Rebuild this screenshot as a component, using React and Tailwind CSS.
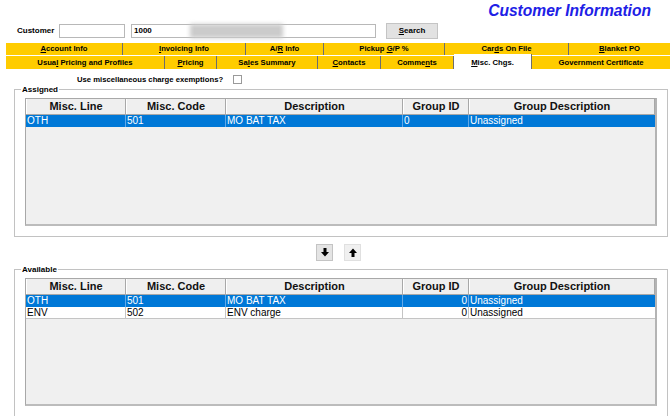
import React from "react";

const F = { fontFamily: '"Liberation Sans", Arial, sans-serif' };

function Tab({ w, children, sel, last }) {
  return (
    <div
      className={`flex items-center justify-center h-full text-[7.7px] font-bold text-black ${
        last ? "" : "border-r border-r-[#6e6e6e]"
      } ${sel ? "bg-white" : "bg-[#ffcc00]"}`}
      style={{ width: w }}
    >
      {children}
    </div>
  );
}

const COLS = [100, 100, 177, 66];

function Cell({ i, children, right, sel, header }) {
  const w = i < 4 ? { width: COLS[i] } : {};
  return (
    <div
      className={`${i < 4 ? "shrink-0" : "flex-1"} h-full overflow-hidden whitespace-nowrap ${
        header
          ? "flex items-center justify-center border-r border-r-[#a8a8a8] border-l border-l-white"
          : `px-[1px] ${right ? "text-right" : ""} ${i < 4 ? (sel ? "border-r border-r-[#62a8e8]" : "border-r border-r-[#c4c4c4]") : ""}`
      }`}
      style={w}
    >
      {children}
    </div>
  );
}

function Table({ rows, rightId }) {
  const heads = ["Misc. Line", "Misc. Code", "Description", "Group ID", "Group Description"];
  return (
    <div className="w-[632px] h-[128px] bg-[#f0f0f0] border border-[#a8a8a8] border-r-2 border-r-[#b4b4b4] border-b-2 border-b-[#bcbcbc] flex flex-col">
      <div className="flex h-[16px] bg-[#efefef] border-b border-b-[#a8a8a8] text-[11px] font-bold text-[#111]">
        {heads.map((h, i) => (
          <Cell key={i} i={i} header>
            {h}
          </Cell>
        ))}
      </div>
      {rows.map((r, ri) => (
        <div
          key={ri}
          className={`flex h-[12px] text-[10px] leading-[12px] ${
            r.sel ? "bg-[#0078d7] text-white" : "bg-white text-black border-b border-b-[#c4c4c4]"
          }`}
        >
          {r.cells.map((c, i) => (
            <Cell key={i} i={i} sel={r.sel} right={rightId && i === 3}>
              {c}
            </Cell>
          ))}
        </div>
      ))}
    </div>
  );
}

function Group({ label, children, h }) {
  return (
    <fieldset className="ml-[14px] w-[654px] border border-[#c2c2c2] m-0 p-0" style={{ minHeight: h }}>
      <legend className="ml-[6px] px-[1px] text-[8px] leading-[9px] font-bold text-black">{label}</legend>
      <div className="px-[10px] pt-[4px] pb-[10px]">{children}</div>
    </fieldset>
  );
}

function Arrow({ up }) {
  return (
    <svg width="8" height="9" viewBox="0 0 8 9" className={up ? "rotate-180" : ""}>
      <path d="M2.5 0h3v4H8L4 8.6 0 4h2.5z" fill="#000" />
    </svg>
  );
}

export default function App() {
  return (
    <div className="w-[670px] h-[416px] overflow-hidden bg-white relative" style={F}>
      <div className="h-[22px] flex justify-end items-start pr-[19px] pt-[2px]">
        <span className="text-[15.6px] leading-[18px] font-bold italic text-[#2020e6]">Customer Information</span>
      </div>
      <div className="h-[17px] flex items-center text-[8px] font-bold text-black">
        <span className="ml-[17px] w-[42px]">Customer</span>
        <div className="w-[66px] h-[14px] border border-[#b8b8b8] bg-white" />
        <div className="ml-[6px] w-[245px] h-[14px] border border-[#b8b8b8] bg-white flex items-center overflow-visible">
          <span className="pl-[2px] w-[58px]">1000</span>
          <span className="w-[93px] h-[14px] bg-[#cbcbcb] blur-[2px]" />
        </div>
        <div className="ml-[10px] w-[52px] h-[16px] bg-[#e2e2e2] border border-[#c4c4c4] flex items-center justify-center">
          <span>
            <u>S</u>earch
          </span>
        </div>
      </div>
      <div className="mt-[4px] ml-[6px] flex h-[12px]">
        <Tab w={117}><span><u>A</u>ccount Info</span></Tab>
        <Tab w={123}><span><u>I</u>nvoicing Info</span></Tab>
        <Tab w={78}><span>A/<u>R</u> Info</span></Tab>
        <Tab w={121}><span>Pickup <u>G</u>/P %</span></Tab>
        <Tab w={124}><span>Car<u>d</u>s On File</span></Tab>
        <Tab w={101} last><span><u>B</u>lanket PO</span></Tab>
      </div>
      <div className="mt-[1px] ml-[6px] flex h-[13px]">
        <Tab w={159}><span>Usua<u>l</u> Pricing and Profiles</span></Tab>
        <Tab w={52}><span><u>P</u>ricing</span></Tab>
        <Tab w={101}><span>Sa<u>l</u>es Summary</span></Tab>
        <Tab w={63}><span><u>C</u>ontacts</span></Tab>
        <Tab w={73}><span>Comme<u>n</u>ts</span></Tab>
        <div className="w-[78px] h-[15px] -mt-[2px] bg-white border-r border-r-[#6e6e6e] flex items-start justify-center pt-[3px] text-[7.7px] font-bold text-black">
          <span><u>M</u>isc. Chgs.</span>
        </div>
        <Tab w={138} last><span>Government Certificate</span></Tab>
      </div>
      <div className="mt-[5px] h-[11px] flex items-center text-[7.7px] font-bold text-black">
        <span className="ml-[77px]">Use miscellaneous charge exemptions?</span>
        <div className="ml-[10px] w-[9px] h-[9px] border border-[#9a9a9a] bg-white" />
      </div>
      <Group label="Assigned">
        <Table rows={[{ sel: true, cells: ["OTH", "501", "MO BAT TAX", "0", "Unassigned"] }]} />
      </Group>
      <div className="mt-[7px] h-[17px] flex">
        <div className="ml-[316px] w-[17px] h-[17px] bg-[#e4e4e4] border border-[#c4c4c4] flex items-center justify-center">
          <Arrow />
        </div>
        <div className="ml-[11px] w-[17px] h-[17px] bg-[#f0f0f0] border border-[#e0e0e0] flex items-center justify-center">
          <Arrow up />
        </div>
      </div>
      <div className="mt-[4px]">
        <Group label="Available" h={170}>
          <Table
            rightId
            rows={[
              { sel: true, cells: ["OTH", "501", "MO BAT TAX", "0", "Unassigned"] },
              { sel: false, cells: ["ENV", "502", "ENV charge", "0", "Unassigned"] },
            ]}
          />
        </Group>
      </div>
    </div>
  );
}
